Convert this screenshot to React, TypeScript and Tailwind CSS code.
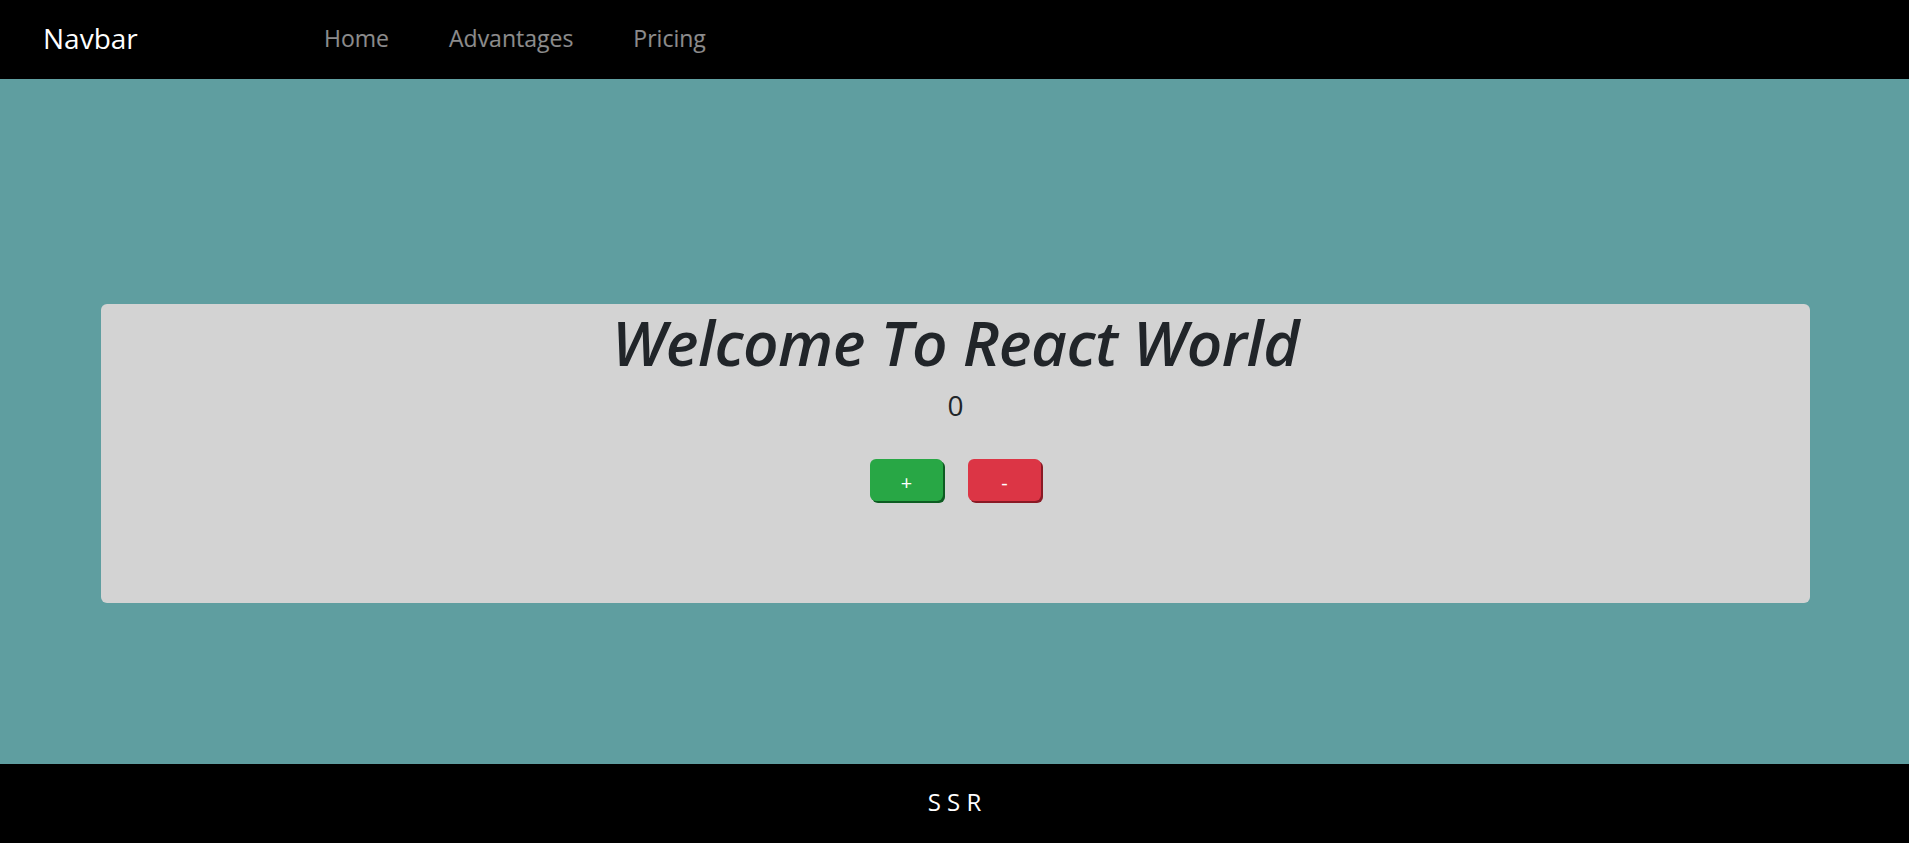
import React, { useState } from 'react';

const font = { fontFamily: '"Open Sans", "Noto Sans", sans-serif' };

function Navbar() {
  return (
    <nav className="h-[79px] bg-black flex items-center pl-[43px]">
      <span className="text-white text-[28px] w-[281px] -mt-[3px]">Navbar</span>
      <ul className="flex items-center gap-[60px] text-[23px] text-white/55 -mt-[2px]">
        <li>Home</li>
        <li>Advantages</li>
        <li>Pricing</li>
      </ul>
    </nav>
  );
}

export default function App() {
  const [count, setCount] = useState(0);

  return (
    <div className="min-h-screen flex flex-col bg-[#5f9ea0]" style={font}>
      <Navbar />
      <main className="flex-1 pt-[225px] pl-[101px] pr-[99px]">
        <div className="h-[299px] bg-[#d3d3d3] rounded-[6px] flex flex-col items-center text-[#212529]">
          <h1 className="italic font-semibold text-[62px] leading-none mt-[7px] tracking-[-0.5px]">Welcome To React World</h1>
          <p className="text-[28px] leading-none mt-[18px]">{count}</p>
          <div className="flex gap-[25px] mt-[40px]">
            <button
              onClick={() => setCount(count + 1)}
              className="w-[73px] h-[42px] pt-[5px] rounded-[6px] bg-[#28a745] text-white text-[20px] shadow-[2px_2px_0_#0d5c22]"
            >
              +
            </button>
            <button
              onClick={() => setCount(count - 1)}
              className="w-[73px] h-[42px] pt-[5px] rounded-[6px] bg-[#dc3545] text-white text-[20px] shadow-[2px_2px_0_#8a1a25]"
            >
              -
            </button>
          </div>
        </div>
      </main>
      <footer className="h-[79px] bg-black flex items-center justify-center text-white text-[24px]">
        <span className="-mt-[3px]">S S R</span>
      </footer>
    </div>
  );
}
